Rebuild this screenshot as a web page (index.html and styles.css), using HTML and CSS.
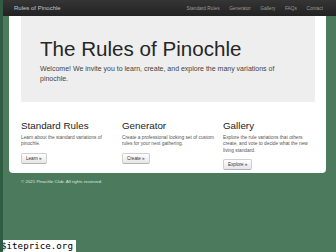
FILE: index.html
```html
<!DOCTYPE html>
<html>
<head>
<meta charset="utf-8">
<link rel="stylesheet" href="styles.css">
</head>
<body>
<nav class="navbar">
  <a class="brand">Rules of Pinochle</a>
  <ul class="nav">
    <li>Standard Rules</li>
    <li>Generator</li>
    <li>Gallery</li>
    <li>FAQs</li>
    <li>Contact</li>
  </ul>
</nav>
<main class="panel">
  <section class="jumbotron">
    <h1>The Rules of Pinochle</h1>
    <p>Welcome! We invite you to learn, create, and explore the many variations of pinochle.</p>
  </section>
  <section class="row">
    <div class="col">
      <h2>Standard Rules</h2>
      <p>Learn about the standard variations of pinochle.</p>
      <a class="btn">Learn &raquo;</a>
    </div>
    <div class="col">
      <h2>Generator</h2>
      <p>Create a professional looking set of custom rules for your next gathering.</p>
      <a class="btn">Create &raquo;</a>
    </div>
    <div class="col">
      <h2>Gallery</h2>
      <p>Explore the rule variations that others create, and vote to decide what the new living standard.</p>
      <a class="btn">Explore &raquo;</a>
    </div>
  </section>
</main>
<footer class="footer">&copy; 2021 Pinochle Club. All rights reserved.</footer>
<div class="watermark">$iteprice.org</div>
</body>
</html>
```
FILE: styles.css
```css
html, body {
  margin: 0;
  padding: 0;
}
body {
  background: #4b7a5c;
  font-family: "Liberation Sans", Arial, sans-serif;
  color: #333;
  height: 252px;
  overflow: hidden;
  position: relative;
  border-left: 3px solid #2f5c43;
  box-sizing: border-box;
}
.navbar {
  height: 16px;
  background: linear-gradient(#353535, #222);
  display: flex;
  align-items: center;
  justify-content: space-between;
  padding: 0 13px 0 11px;
}
.brand {
  color: #c4c4c4;
  font-size: 6px;
}
.nav {
  list-style: none;
  margin: 0;
  padding: 0;
  display: flex;
  gap: 9.5px;
  font-size: 4.8px;
  color: #9a9a9a;
}
.panel {
  background: #fff;
  margin: 0 10px 0 6px;
  padding: 0 11px 3px 12px;
  border-radius: 0 0 4px 4px;
}
.jumbotron {
  background: #eee;
  padding: 21px 30px 18px 19px;
}
.jumbotron h1 {
  margin: 0;
  font-size: 20.6px;
  line-height: 23px;
  font-weight: normal;
  color: #262626;
}
.jumbotron p {
  margin: 4px 0 0;
  font-size: 7px;
  line-height: 10px;
  color: #444;
}
.row {
  display: grid;
  grid-template-columns: repeat(3, 1fr);
  gap: 9px;
  padding-top: 18px;
}
.col {
  display: flex;
  flex-direction: column;
  align-items: flex-start;
}
.col h2 {
  margin: 0;
  font-size: 9.8px;
  line-height: 12px;
  font-weight: normal;
  color: #222;
}
.col p {
  margin: 3px 0 5px;
  font-size: 4.8px;
  line-height: 6.3px;
  color: #555;
}
.btn {
  display: block;
  font-size: 4.6px;
  line-height: 5.5px;
  padding: 2px 4px;
  color: #333;
  background: linear-gradient(#fff, #e6e6e6);
  border: 1px solid #d0d0d0;
  border-bottom-color: #b3b3b3;
  border-radius: 2px;
}
.footer {
  padding: 6px 0 0 18px;
  font-size: 4.4px;
  color: #dfe8e2;
}
.watermark {
  position: absolute;
  left: -3px;
  bottom: 0;
  background: #fff;
  color: #000;
  font-family: "DejaVu Sans Mono", monospace;
  font-size: 9.2px;
  line-height: 12px;
  padding: 0 3px 0 1px;
}
```
